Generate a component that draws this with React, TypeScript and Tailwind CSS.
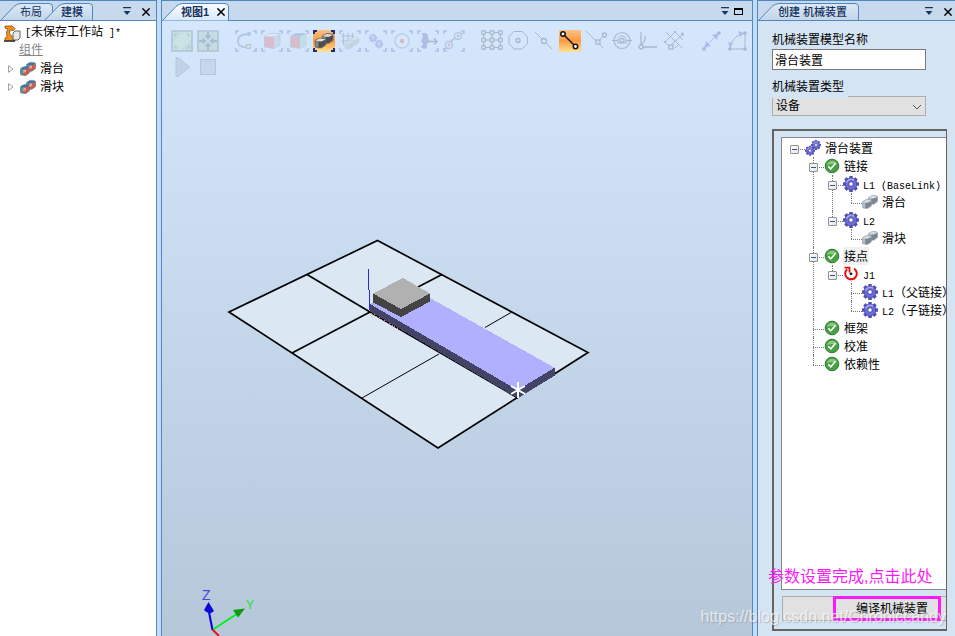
import { useState } from 'react';
import type { ReactNode } from 'react';

type Node = {
  name: string;
  icon: 'gears' | 'gear' | 'check' | 'part' | 'joint';
  children?: Node[];
};

const mechanism: Node = {
  name: '滑台装置',
  icon: 'gears',
  children: [
    {
      name: '链接',
      icon: 'check',
      children: [
        { name: 'L1 (BaseLink)', icon: 'gear', children: [{ name: '滑台', icon: 'part' }] },
        { name: 'L2', icon: 'gear', children: [{ name: '滑块', icon: 'part' }] },
      ],
    },
    {
      name: '接点',
      icon: 'check',
      children: [
        {
          name: 'J1',
          icon: 'joint',
          children: [
            { name: 'L1（父链接）', icon: 'gear' },
            { name: 'L2（子链接）', icon: 'gear' },
          ],
        },
      ],
    },
    { name: '框架', icon: 'check' },
    { name: '校准', icon: 'check' },
    { name: '依赖性', icon: 'check' },
  ],
};

// Latin runs are set in a half-width mono face next to the Chinese text
function Mixed({ text }: { text: string }) {
  return (
    <>
      {text.split(/([\x20-\x7e]+)/).map((part, i) =>
        i % 2 === 1 ? (
          <span key={i} className="whitespace-pre font-['Liberation_Mono',monospace] text-[10px]">{part}</span>
        ) : (
          part
        )
      )}
    </>
  );
}

/* ---------- small icons ---------- */

const teeth = [0, 45, 90, 135, 180, 225, 270, 315];

function GearShape({ cx, cy, r }: { cx: number; cy: number; r: number }) {
  return (
    <g transform={`translate(${cx} ${cy}) scale(${r / 8})`}>
      {teeth.map(a => (
        <rect key={a} x="-1.8" y="-8" width="3.6" height="5" rx="0.6" fill="#5050b4" transform={`rotate(${a})`} />
      ))}
      <circle r="5.9" fill="#6c6cd6" stroke="#4646a8" strokeWidth="0.8" />
      <path d="M-4.4 -1.5A4.6 4.6 0 0 1 3 -3.6" stroke="#a9a9f2" strokeWidth="1.4" fill="none" />
      <circle r="2.3" fill="#fff" stroke="#3c3c98" strokeWidth="0.9" />
    </g>
  );
}

// two rounded blocks, the back one up and to the right of the front one
function Boxes({ front, side, top, edge }: { front: string; side: string; top: string; edge: string }) {
  const block = (
    <>
      <path d="M0.5 3.2Q0.5 2.5 1.2 2.1L3.8 0.8Q4.500 0.5 5.300 0.600L8.500 1Q9.500 1.200 9.500 2V6.200Q9.500 6.800 9 7.200L6.200 9.200Q5.600 9.600 4.800 9.500L1.300 9Q0.500 8.900 0.500 8Z" fill={side} stroke={edge} strokeWidth="0.5" />
      <path d="M3.300 3.900L9.200 2.200V6.300L5.800 9.100L3.300 9Z" fill={front} />
      <path d="M0.900 2.800L4.200 1L9.200 1.600L5.800 3.700Z" fill={top} />
    </>
  );
  return (
    <>
      <g transform="translate(6 0.8)">{block}</g>
      <g transform="translate(0 5)">{block}</g>
    </>
  );
}

function TreeIcon({ icon }: { icon: Node['icon'] }) {
  return (
    <svg viewBox="0 0 16 16" className="h-4 w-4 shrink-0">
      {icon === 'gears' && (
        <>
          <GearShape cx={11} cy={5} r={5} />
          <GearShape cx={5} cy={10.7} r={5} />
        </>
      )}
      {icon === 'gear' && <GearShape cx={8} cy={8} r={8} />}
      {icon === 'check' && (
        <>
          <circle cx="8" cy="8" r="6.8" fill="#48a044" stroke="#2f7a30" />
          <path d="M2.8 7A5.3 5.3 0 0 1 13 6.5Q8 5.5 2.8 7Z" fill="#8dcc80" />
          <path d="M4.3 8.4L6.8 10.8L11.5 5.3" fill="none" stroke="#fff" strokeWidth="1.6" />
        </>
      )}
      {icon === 'part' && <Boxes front="#7d848b" side="#a9c0d4" top="#d9dee2" edge="#7d8790" />}
      {icon === 'joint' && (
        <>
          <path d="M4.2 3.2A5.8 5.8 0 1 0 11 2.6" fill="none" stroke="#f00a0a" strokeWidth="2" />
          <path d="M1.5 1.6H6.5V6.6" fill="none" stroke="#f00a0a" strokeWidth="1.8" />
          <circle cx="8" cy="7.8" r="1.4" fill="#111" />
        </>
      )}
    </svg>
  );
}

function PinIcon() {
  return (
    <svg viewBox="0 0 8 9" className="h-[9px] w-2" fill="#17375e">
      <path d="M0 0H8V1.3H0ZM0.5 4H7.5L4 8Z" />
    </svg>
  );
}

function CloseIcon() {
  return (
    <svg viewBox="0 0 8 8" className="h-2 w-2" stroke="#000" strokeWidth="1.5">
      <path d="M0.4 0.4L7.6 7.6M7.6 0.4L0.4 7.6" />
    </svg>
  );
}

/* ---------- tab strip ---------- */

function Tab({ width, active, children }: { width: number; active?: boolean; children: ReactNode }) {
  const outline = `M0.5 17.5L14 3.5Q17 0.5 21 0.5H${width - 4}Q${width - 0.5} 0.5 ${width - 0.5} 4V17.5`;
  return (
    <div className="relative h-[18px] shrink-0" style={{ width }}>
      <svg className="absolute inset-0 h-full w-full" viewBox={`0 0 ${width} 18`}>
        <defs>
          <linearGradient id="tabOn" x2="0" y2="1">
            <stop stopColor="#fbfdff" />
            <stop offset="1" stopColor="#d8e8fa" />
          </linearGradient>
          <linearGradient id="tabOff" x2="0" y2="1">
            <stop stopColor="#dce9f7" />
            <stop offset="1" stopColor="#c3d5ea" />
          </linearGradient>
        </defs>
        <path d={outline} fill={active ? 'url(#tabOn)' : 'url(#tabOff)'} stroke="#5286bf" />
        {!active && <path d={`M0 17.5H${width}`} stroke="#5286bf" />}
      </svg>
      <div className="relative flex h-full items-center text-[11px] leading-5 text-[#15305c]">{children}</div>
    </div>
  );
}

function PanelHeader({ tabs, tools, className }: { tabs: ReactNode; tools: ReactNode; className: string }) {
  return (
    <header className={`flex h-[21px] shrink-0 items-end border-t border-b border-[#5286bf] bg-[#c7d9ed] ${className}`}>
      <div className="-mb-px flex">{tabs}</div>
      <div className="ml-auto flex h-full items-center gap-[11px] pt-[2px]">{tools}</div>
    </header>
  );
}

/* ---------- viewport toolbar ---------- */

const corners = <path d="M1 4V1H4M18 1H21V4M21 18V21H18M4 21H1V18" stroke="#3c50a8" strokeWidth="1.6" fill="none" />;

const cube = (front: string, top: string, side: string) => (
  <>
    <path d="M3.500 6.500L8 3.500H19L15 6.500Z" fill={top} />
    <path d="M3.500 6.500H13V18.500L3.500 17Z" fill={front} />
    <path d="M13 6.500L19 3.500V15L13 18.500Z" fill={side} />
    <path d="M3.500 6.500L8 3.500H19V15L13 18.500L3.500 17Z" fill="none" stroke="#667" strokeWidth="0.6" />
  </>
);

const dot = (x: number, y: number, r = 2) => <circle key={`${x}-${y}`} cx={x} cy={y} r={r} fill="#dbe8f8" stroke="#333" strokeWidth="1.3" />;

type Tool = { label: string; on?: boolean; art: ReactNode };

const frame = <rect x="1" y="1" width="20" height="20" fill="#9cc79a" stroke="#41605a" strokeWidth="1.5" />;

const toolGroups: Tool[][] = [
  [
    { label: '全部缩放', art: <>{frame}<path d="M2 20V12L15 2H20V10L10 20Z" fill="#b4dca6" /><path d="M4 7V4H7M15 4H18V7M18 15V18H15M7 18H4V15" stroke="#41605a" fill="none" /></> },
    { label: '缩放选定', art: <>{frame}<path d="M2 11H8M20 11H14M11 2V8M11 20V14" stroke="#2a3a66" strokeWidth="2" /><path d="M5.500 7.500L9.500 11L5.500 14.500ZM16.500 7.500L12.500 11L16.500 14.500ZM7.500 5.500L11 9.500L14.500 5.500ZM7.500 16.500L11 12.500L14.500 16.500Z" fill="#2a3a66" /></> },
  ],
  [
    { label: '选择曲线', art: <>{corners}<path d="M14 4Q3 4 3 11T13 17" fill="none" stroke="#4a6a9c" strokeWidth="1.8" /><circle cx="14" cy="4" r="2.2" fill="#4a6a9c" /><rect x="11.500" y="14.500" width="4" height="4" fill="#e8e020" stroke="#4a6a9c" /></> },
    { label: '选择表面', art: <>{corners}{cube('#e04848', '#f2f2f2', '#a9b4c0')}</> },
    { label: '选择物体', art: <>{corners}{cube('#e04848', '#2c6fa8', '#7fd0b8')}</> },
    { label: '选择部件', on: true, art: <><g transform="translate(1.5 2) scale(1.2 1.1)"><Boxes front="#4c4c4c" side="#8a8a8a" top="#dcdcdc" edge="#444" /></g><path d="M1 4V1H4M18 1H21V4M21 18V21H18M4 21H1V18" stroke="#1e2a78" strokeWidth="2" fill="none" /></> },
    { label: '选择组', art: <>{corners}<path d="M4.500 3V15M9 3V13M13.500 3V9M2 6H15M2 11H9" stroke="#556" strokeWidth="1.2" /><g transform="translate(5.500 6) scale(0.92 0.9)"><Boxes front="#8fa39d" side="#a8bab4" top="#ccd8d4" edge="#778" /></g></> },
    { label: '选择机械装置', art: <>{corners}<GearShape cx={8} cy={8} r={4.2} /><GearShape cx={14} cy={14} r={4.2} /></> },
    { label: '选择目标点', art: <>{corners}<circle cx="11" cy="11" r="7" fill="#e6eef8" stroke="#7b8ab8" strokeWidth="1.5" /><circle cx="11" cy="11" r="2.2" fill="#d0401c" /></> },
    { label: '选择移动指令', art: <>{corners}<path d="M5 3H9L11 5V8L12 10V12L10 14V18L7 19L4 17L6 14L4 11L6 7Z" fill="#4848b0" /><path d="M10 11.500H20M17 8.500L20 11.500L17 14.500" stroke="#334" strokeWidth="1.5" fill="none" /></> },
    { label: '选择路径', art: <>{corners}<path d="M1 18Q4 20 6 15T15 6T20 2" stroke="#4a6aac" strokeWidth="1.5" fill="none" /><circle cx="6" cy="15" r="3.5" fill="#e6eef8" stroke="#4a6aac" strokeWidth="1.4" /><circle cx="15" cy="6" r="3.5" fill="#e6eef8" stroke="#4a6aac" strokeWidth="1.4" /><circle cx="6" cy="15" r="1.400" fill="#d0401c" /><circle cx="15" cy="6" r="1.400" fill="#d0401c" /></> },
  ],
  [
    { label: '捕捉对象', art: <><path d="M2.5 2.5H19.5V17.5H2.5ZM2.500 10H19.500M11 2.500V17.500" fill="none" stroke="#333" />{[2.5, 11, 19.5].map(x => [2.5, 10, 17.5].map(y => dot(x, y)))}</> },
    { label: '捕捉中心', art: <><path d="M7 1.500H15L20.500 6.500V13.500L15 19H7L2 13.500V6.500Z" fill="none" stroke="#333" />{dot(11, 10.5)}</> },
    { label: '捕捉中点', art: <><path d="M2 2L19 19" stroke="#333" />{dot(11, 11, 2.5)}</> },
    { label: '捕捉末端', on: true, art: <><path d="M4 4L16 16" stroke="#111" strokeWidth="1.4" /><circle cx="4" cy="4" r="2.2" fill="#fff" stroke="#111" strokeWidth="1.5" /><circle cx="16.5" cy="16.5" r="2.2" fill="#fff" stroke="#111" strokeWidth="1.5" /></> },
    { label: '捕捉边缘', art: <><path d="M1 1L18 18M13 12L18 6" stroke="#333" /><rect x="11" y="10" width="4" height="4" fill="#dbe8f8" stroke="#333" strokeWidth="1.3" />{dot(19.5, 5)}</> },
    { label: '捕捉重心', art: <><circle cx="11" cy="10.500" r="8" fill="none" stroke="#333" strokeWidth="1.200" /><path d="M1 10.500H7M15 10.500H21M6.500 13H15.500M7 13Q6 6 11 6T15 13" fill="none" stroke="#333" />{dot(11, 10.500)}</> },
    { label: '捕捉本地原点', art: <><path d="M4 2V17H20M4 15Q9 11 8 6" fill="none" stroke="#333" strokeWidth="1.3" />{dot(4, 17)}</> },
    { label: '捕捉网格', art: <><path d="M1 13L13 1M8 15L20 4M3 2L19 18M11 1L20 10M1 11L6 16M12 18L16 14" stroke="#333" /><rect x="6" y="15" width="4" height="4" fill="#dbe8f8" stroke="#333" strokeWidth="1.3" /><circle cx="19.500" cy="4" r="1.500" fill="#333" /></> },
  ],
  [
    { label: '点到点', art: <><path d="M3 18L18 3" stroke="#4646d0" /><path d="M3 18L5 11L10 16ZM18 3L16 10L11 5Z" fill="#4646d0" /><circle cx="3" cy="19" r="1.8" fill="#333" /><circle cx="18" cy="3" r="1.8" fill="#333" /></> },
    { label: '角度', art: <><path d="M3 19H18V3M3 19Q4 6 18 3" fill="none" stroke="#333" /><path d="M3 18L1 12L6 13ZM17 3L11 1L13 7Z" fill="#4646d0" /><circle cx="3" cy="19" r="1.8" fill="#333" /><circle cx="18" cy="19" r="1.8" fill="#333" /><circle cx="18" cy="3" r="1.8" fill="#333" /></> },
  ],
];

const playback: Tool[] = [
  { label: '播放', art: <path d="M5 1.500H7L18.500 11L7 20.500H5Z" fill="#8ea3ae" stroke="#5c6f7c" /> },
  { label: '停止', art: <rect x="3.5" y="3.5" width="15" height="15" fill="#9fb2bf" stroke="#5c6f7c" /> },
];

function ToolButton({ tool }: { tool: Tool }) {
  return (
    <button
      type="button"
      aria-label={tool.label}
      aria-pressed={!!tool.on}
      className={`h-[22px] w-[22px] shrink-0 ${tool.on ? 'bg-linear-to-b from-[#fcc184] via-[#fb9a3c] to-[#fde295]' : 'opacity-25'}`}
    >
      <svg viewBox="0 0 22 22" className="h-[22px] w-[22px]">{tool.art}</svg>
    </button>
  );
}

/* ---------- 3D scene ---------- */

function Scene() {
  return (
    <svg className="absolute inset-0 h-full w-full" viewBox="162 21 590 615">
      <path d="M229 312L377.500 240.500L588 352.500L438 448Z" fill="#dbe8f4" />
      <g fill="none" stroke="#000">
        <path d="M229 312L377.500 240.500L588 352.500L438 448Z" strokeWidth="1.7" />
        <path d="M307 274.500L370 312L518 398M292 353L370 312L442 274.500" strokeWidth="1.7" />
        <path d="M362 398L439 354M485 327.500L511 312.500" strokeWidth="1" />
      </g>
      <g shapeRendering="crispEdges">
        <path d="M370 304L405 285L430 298L555 368L517.500 390Z" fill="#b0b0fe" />
        <path d="M370 304L517.500 390V398L370 311.500Z" fill="#434366" />
        <path d="M517.500 390L555 367.500V375.500L517.500 398Z" fill="#434366" />
        <path d="M373 293.500L403 278L430 293.500L401 309Z" fill="#b1b1b1" />
        <path d="M373 293.500L401 309L430 293.500V301.500L401 317L373 302.500Z" fill="#434343" />
        <path d="M368.500 269V290M369.500 290V310" stroke="#2a2ad0" />
        <path d="M371 313L402 331" stroke="#e87070" strokeDasharray="1 2" />
      </g>
      <path d="M518 382V398M511 386L525 394M525 386L511 394" stroke="#fff" strokeWidth="2" />
      <path d="M212.500 630L209 612" stroke="#0000e0" strokeWidth="2" />
      <path d="M208.500 602L214 611Q209 616 204 610Z" fill="#0a0ad8" />
      <path d="M213 629.500L236 614.500" stroke="#00f020" strokeWidth="2" />
      <path d="M245 608.500L233 610L238 617.500Z" fill="#0c9c10" />
      <path d="M212.500 629.500L219 636" stroke="#f01010" strokeWidth="2" />
      <text x="202" y="600" fill="#4444e0" className="font-['Liberation_Sans',sans-serif] text-[14px]">Z</text>
      <text x="246" y="609" fill="#22e022" className="font-['Liberation_Sans',sans-serif] text-[12px]">Y</text>
    </svg>
  );
}

/* ---------- mechanism tree ---------- */

function TreeItem({ node, root, last, selected, onSelect }: { node: Node; root?: boolean; last?: boolean; selected: string; onSelect: (name: string) => void }) {
  const [open, setOpen] = useState(true);
  return (
    <li className="relative">
      {!root && <span className={`absolute top-0 left-3 border-l border-dotted border-[#777] ${last ? 'h-[10px]' : 'h-full'}`} />}
      <div className="relative flex h-[18px] items-center pl-2">
        <span className="absolute top-[10px] left-3 w-[11px] border-t border-dotted border-[#777]" />
        {node.children ? (
          <button
            type="button"
            aria-label={open ? '折叠' : '展开'}
            onClick={() => setOpen(!open)}
            className="relative mt-[2px] flex h-[9px] w-[9px] shrink-0 items-center justify-center rounded-[1px] border border-[#919191] bg-linear-to-br from-white to-[#e4e4e4]"
          >
            <span className="h-px w-[5px] bg-[#2f4fa8]" />
            {!open && <span className="absolute h-[5px] w-px bg-[#2f4fa8]" />}
          </button>
        ) : (
          <span className="w-[9px] shrink-0" />
        )}
        <span className="ml-[6px] flex"><TreeIcon icon={node.icon} /></span>
        <button
          type="button"
          onClick={() => onSelect(node.name)}
          className={`ml-[3px] h-[18px] px-px text-left leading-5 whitespace-nowrap ${selected === node.name ? 'bg-[#f0f0f0]' : ''}`}
        >
          <Mixed text={node.name} />
        </button>
      </div>
      {node.children && open && (
        <ul className="pl-[19px]">
          {node.children.map((child, i) => (
            <TreeItem key={child.name} node={child} last={i === node.children!.length - 1} selected={selected} onSelect={onSelect} />
          ))}
        </ul>
      )}
    </li>
  );
}

function LayoutPanel() {
  return (
    <aside className="flex w-[157px] shrink-0 flex-col border-r border-[#5286bf] bg-white">
      <PanelHeader
        className="pr-[6px]"
        tabs={
          <>
            <Tab width={53}><button type="button" className="pl-5">布局</button></Tab>
            <div className="-ml-[9px]">
              <Tab width={49}><button type="button" className="pl-[17px] font-medium">建模</button></Tab>
            </div>
          </>
        }
        tools={
          <>
            <button type="button" aria-label="选项"><PinIcon /></button>
            <button type="button" aria-label="关闭"><CloseIcon /></button>
          </>
        }
      />
      <ul className="pt-[3px] leading-5">
        <li className="flex h-[18px] items-center gap-1 pl-1 whitespace-nowrap">
          <svg viewBox="0 0 17 17" className="h-[17px] w-[17px] shrink-0">
            <path d="M1 1H8L11 3.500L9.500 5.500L6 5L5.500 8.500L9 12.500H11V16H1V13L3 12L2.500 7L4 4L1 3Z" fill="#f0921e" stroke="#8a4c0c" strokeWidth="0.8" />
            <path d="M9 8L11 6H16V13L14 15H9Z" fill="#e8e8e8" stroke="#555" strokeWidth="0.9" />
            <path d="M0 16H11" stroke="#333" strokeWidth="1.5" />
          </svg>
          <span><Mixed text="[未保存工作站 ]*" /></span>
        </li>
        <li className="h-[18px] pl-[19px] leading-4 text-[#888] underline">组件</li>
        {['滑台', '滑块'].map(name => (
          <li key={name} className="flex h-[18px] items-center pl-2">
            <svg viewBox="0 0 6 8" className="h-2 w-[6px] shrink-0"><path d="M0.500 0.700L5 4L0.500 7.300Z" fill="#fff" stroke="#a0a0a0" /></svg>
            <svg viewBox="0 0 16 16" className="mr-1 ml-[6px] h-4 w-4 shrink-0">
              <Boxes front="#d8564c" side="#4a9a94" top="#4472b0" edge="#3e5272" />
              <path d="M3.300 9L6 8.500V11L3.300 12ZM9.300 5L12 4.300V7L9.300 8Z" fill="#f2a299" />
            </svg>
            {name}
          </li>
        ))}
      </ul>
    </aside>
  );
}

function ViewPanel() {
  return (
    <main className="flex min-w-0 flex-1 flex-col border-x border-[#5286bf]">
      <PanelHeader
        className="pr-[9px]"
        tabs={
          <Tab width={67} active>
            <button type="button" className="pl-[19px] font-bold">视图1</button>
            <button type="button" aria-label="关闭" className="ml-2"><CloseIcon /></button>
          </Tab>
        }
        tools={
          <>
            <button type="button" aria-label="选项" className="-mr-[6px]"><PinIcon /></button>
            <button type="button" aria-label="最大化">
              <svg viewBox="0 0 9 7" className="h-[7px] w-[9px]"><path d="M0 0H9V7H0ZM1 2V6H8V2Z" fill="#000" fillRule="evenodd" /></svg>
            </button>
          </>
        }
      />
      <div className="relative flex-1 overflow-hidden bg-linear-to-b from-[#d5e7fd] to-[#b5c7d9]">
        <Scene />
        <div className="relative flex flex-col gap-1 pt-[9px] pl-[9px]">
          <div className="flex gap-4">
            {toolGroups.map((group, i) => (
              <div key={i} className="flex gap-1">
                {group.map(tool => <ToolButton key={tool.label} tool={tool} />)}
              </div>
            ))}
          </div>
          <div className="flex gap-1">
            {playback.map(tool => <ToolButton key={tool.label} tool={tool} />)}
          </div>
        </div>
      </div>
    </main>
  );
}

function MechanismPanel() {
  const [modelName, setModelName] = useState('滑台装置');
  const [selected, setSelected] = useState('接点');

  return (
    <aside className="flex w-[198px] shrink-0 flex-col border-l border-[#5286bf] bg-[#d5e4f3]">
      <PanelHeader
        className="pr-[3px]"
        tabs={<Tab width={101}><button type="button" className="pl-5 font-medium">创建 机械装置</button></Tab>}
        tools={
          <>
            <button type="button" aria-label="选项"><PinIcon /></button>
            <button type="button" aria-label="关闭"><CloseIcon /></button>
          </>
        }
      />
      <div className="relative flex min-h-0 flex-1 flex-col pt-[10px] pr-2 pb-[5px] pl-[14px]">
        <label htmlFor="model" className="h-4 leading-[18px]">机械装置模型名称</label>
        <input
          id="model"
          value={modelName}
          onChange={e => setModelName(e.target.value)}
          className="mt-[2px] h-[21px] w-[154px] shrink-0 border border-[#7a7a7a] bg-white px-[2px]"
        />
        <label htmlFor="type" className="relative z-10 mt-2 h-5 w-[76px] shrink-0 bg-[#d5e4f3] leading-[18px]">机械装置类型</label>
        <div className="relative -mt-[2px] h-5 w-[154px] shrink-0">
          <select id="type" defaultValue="device" className="h-5 w-full appearance-none border border-[#adadad] bg-[#e1e1e1] px-[3px] leading-[18px]">
            <option value="device">设备</option>
          </select>
          <svg viewBox="0 0 10 6" className="pointer-events-none absolute top-2 right-1 h-[6px] w-[10px]"><path d="M1 1L5 5L9 1" fill="none" stroke="#555" /></svg>
        </div>

        <div className="mt-[13px] flex min-h-0 flex-1 flex-col gap-[6px] overflow-hidden border-2 border-r border-[#646464] pt-[6px] pb-2 pl-[7px]">
          <div className="min-h-0 flex-1 overflow-hidden border border-r-0 border-[#828790] bg-white pt-px">
            <ul>
              <TreeItem node={mechanism} root selected={selected} onSelect={setSelected} />
            </ul>
          </div>
          <div className="relative h-[25px] shrink-0">
            <div className="h-full overflow-hidden pl-px">
              <button type="button" className="h-[25px] w-[220px] border border-[#adadad] bg-[#e1e1e1]">编译机械装置</button>
            </div>
            <div className="pointer-events-none absolute inset-y-0 right-[5px] w-[108px] border-3 border-[#fb1cf5]" />
          </div>
        </div>
        <p className="pointer-events-none absolute bottom-[49px] left-[10px] text-[16px] leading-5 whitespace-nowrap text-[#fb1cf5]">参数设置完成,点击此处</p>
      </div>
    </aside>
  );
}

export default function App() {
  return (
    <div className="relative flex h-screen gap-1 overflow-hidden bg-[#c1dbf8] font-['Liberation_Sans','Noto_Sans_CJK_SC',sans-serif] text-[12px] text-black">
      <LayoutPanel />
      <ViewPanel />
      <MechanismPanel />
      <p className="pointer-events-none absolute right-[9px] bottom-[9px] text-[16px] leading-5 text-white/65 [text-shadow:1px_1px_1px_rgba(110,110,110,0.35)]">
        https://blog.csdn.net/Chroniccandy
      </p>
    </div>
  );
}
